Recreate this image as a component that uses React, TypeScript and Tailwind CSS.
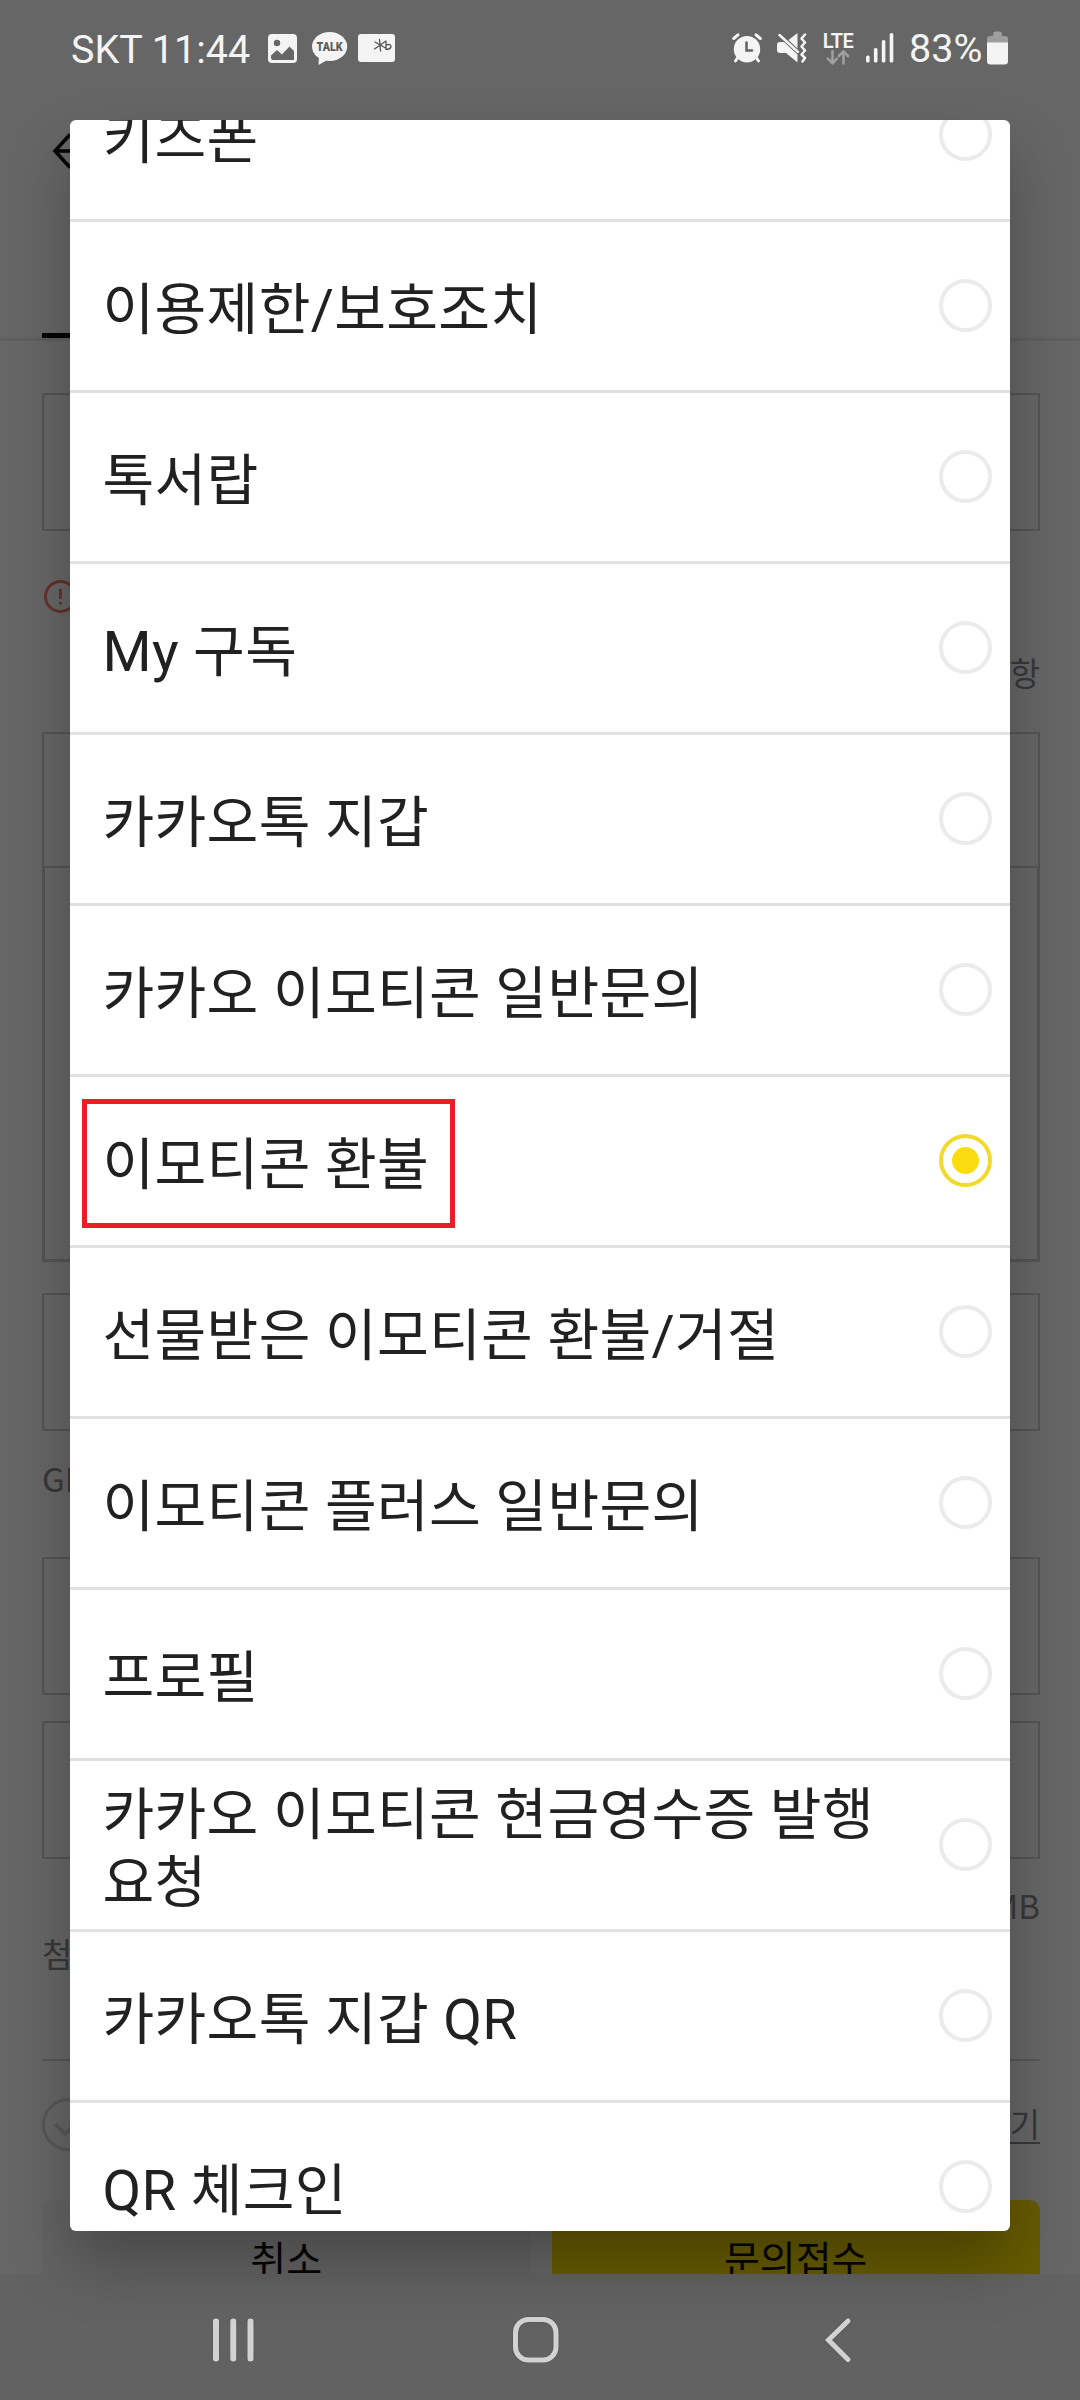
import React from "react";

type Option = { label: string; selected?: boolean };

const options: Option[] = [
  { label: "키즈폰" },
  { label: "이용제한/보호조치" },
  { label: "톡서랍" },
  { label: "My 구독" },
  { label: "카카오톡 지갑" },
  { label: "카카오 이모티콘 일반문의" },
  { label: "이모티콘 환불", selected: true },
  { label: "선물받은 이모티콘 환불/거절" },
  { label: "이모티콘 플러스 일반문의" },
  { label: "프로필" },
  { label: "카카오 이모티콘 현금영수증 발행 요청" },
  { label: "카카오톡 지갑 QR" },
  { label: "QR 체크인" },
];

function StatusBar() {
  return (
    <div className="flex h-[85px] shrink-0 items-start text-[#f4f4f4]">
      <div className="flex pl-[71px] pt-[26px]">
        <span className="w-[197px] whitespace-nowrap text-[39.500px] leading-[47px]">SKT 11:44</span>
        <svg className="mt-[8px]" width="29" height="29" viewBox="0 0 29 29">
          <rect width="29" height="29" rx="4" fill="#f4f4f4" />
          <circle cx="9" cy="9" r="3.2" fill="#666" />
          <path d="M3 21.5 L9 16 L14 20.5 L21.5 12.5 L26 17 V26 H5 Q3 26 3 24 Z" fill="#666" />
        </svg>
        <svg className="ml-[15px] mt-[6px]" width="36" height="34" viewBox="0 0 36 34">
          <ellipse cx="17.6" cy="14.5" rx="17.6" ry="14.5" fill="#f4f4f4" />
          <path d="M7 24 L6.5 33 L17 27 Z" fill="#f4f4f4" />
          <text x="17.6" y="19" textAnchor="middle" textLength="26" lengthAdjust="spacingAndGlyphs" fontSize="12.5" fontWeight="900" fill="#5c5c5c">TALK</text>
        </svg>
        <svg className="ml-[10px] mt-[8px]" width="37" height="28" viewBox="0 0 37 28">
          <rect width="37" height="28" rx="3" fill="#f4f4f4" />
          <g fill="none" stroke="#555" strokeWidth="1.3" strokeLinecap="round">
            <path d="M17 8 L27.5 14 M16.5 15 L28 7 M21.5 5.5 L22.5 17 M28 8 V15.5 M28 11 Q33 9.500 33 12.500 Q32 16 28 15" />
          </g>
        </svg>
      </div>
      <div className="ml-auto flex pr-[72px] pt-[25px]">
        <svg className="mt-[8px]" width="30" height="30" viewBox="0 0 30 30">
          <circle cx="15" cy="16.200" r="13.200" fill="#f4f4f4" />
          <g fill="none" stroke="#f4f4f4" strokeWidth="3" strokeLinecap="round">
            <path d="M1.700 5.500 L6 1.800 M28.300 5.500 L24 1.800 M5.500 25 L3.500 28 M24.500 25 L26.500 28" />
          </g>
          <path d="M14.500 9.500 V17.500 H20" fill="none" stroke="#666" strokeWidth="2.600" strokeLinecap="round" />
        </svg>
        <svg className="ml-[15px] mt-[8px]" width="30" height="30" viewBox="0 0 30 30">
          <path d="M3 9 H7 L20.500 21.500 V29.500 L9 20 H3 Q0 20 0 17 V12 Q0 9 3 9 Z" fill="#f4f4f4" />
          <path d="M20.500 0 V15.500 L11.500 7 Z" fill="#f4f4f4" />
          <g fill="none" stroke="#f4f4f4" strokeWidth="2.500" strokeLinecap="round" strokeLinejoin="round">
            <path d="M2.500 2 L21 19" />
            <path d="M28 1.500 L24.500 5.500 L28 9.500 L24.500 13.500 L28 17.500 L24.500 21.500 L28 25 L25.500 28.500" />
          </g>
        </svg>
        <div className="ml-[15px] mt-[5px] flex w-[32px] flex-col items-center">
          <span className="text-[20px] font-semibold leading-[22px] -tracking-[0.5px]">LTE</span>
          <svg className="-mt-[2px]" width="24" height="15" viewBox="0 0 24 15" fill="none" stroke="#a0a0a0" strokeWidth="2.500" strokeLinecap="round" strokeLinejoin="round">
            <path d="M6.500 1 V13 M1.800 8.500 L6.500 13.300 L11 8.500 M17.500 13.500 V1.500 M12.800 6 L17.500 1.500 L22 6" />
          </svg>
        </div>
        <svg className="ml-[12px] mt-[8px]" width="28" height="30" viewBox="0 0 28 30" fill="#f4f4f4">
          <rect x="0" y="22.500" width="3.600" height="7" rx="1.500" />
          <rect x="7.900" y="15" width="3.600" height="14.500" rx="1.500" />
          <rect x="15.800" y="7" width="3.600" height="22.500" rx="1.500" />
          <rect x="23.700" y="0" width="3.600" height="29.500" rx="1.500" />
        </svg>
        <span className="ml-[15px] w-[78px] whitespace-nowrap text-[39.500px] leading-[47px]">83%</span>
        <svg className="mt-[6px]" width="21" height="34" viewBox="0 0 21 34">
          <path d="M6 3 Q6 0.500 8 0.500 H13 Q15 0.500 15 3 V5 H18 Q21 5 21 8 V14 H0 V8 Q0 5 3 5 H6 Z" fill="#9d9d9d" />
          <path d="M0 11.500 H21 V30 Q21 33.500 17.500 33.500 H3.500 Q0 33.500 0 30 Z" fill="#f4f4f4" />
        </svg>
      </div>
    </div>
  );
}

function FormBox({ className }: { className: string }) {
  return <div className={`border-2 border-[#545454] ${className}`} />;
}

/* Inquiry form that sits dimmed under the picker. */
function InquiryForm() {
  return (
    <div className="flex h-[2189px] shrink-0 flex-col overflow-hidden font-['Noto_Sans_CJK_KR',sans-serif] text-[33px] leading-[44px] text-[#383838]">
      <div className="flex h-[256px] shrink-0 flex-col justify-between border-b-[3px] border-[#5e5e5e]">
        <svg className="ml-[52px] mt-[48px]" width="40" height="36" viewBox="0 0 40 36" fill="none" stroke="#000" strokeWidth="3.500">
          <path d="M18 1.500 L3 18 L18 34.500 M3 18 H40" />
        </svg>
        <div className="ml-[42px] h-[5px] w-[240px] bg-[#050505]" />
      </div>
      <div className="flex flex-col px-[42px] pr-[40px]">
        <FormBox className="mt-[52px] h-[138px]" />
        <svg className="ml-[2px] mt-[49px]" width="33" height="33" viewBox="0 0 33 33" fill="none" stroke="#66302a" strokeWidth="2.800">
          <circle cx="16.500" cy="16.500" r="15" />
          <path d="M16.500 9 V19 M16.500 22 V24.500" />
        </svg>
        <p className="mt-[37px] text-right">항</p>
        <FormBox className="mt-[38px] h-[134px] border-b-0" />
        <div className="h-[396px] border-[3px] border-t-2 border-[#545454]" />
        <FormBox className="mt-[31px] h-[138px]" />
        <p className="mt-[25px]">GIF</p>
        <FormBox className="mt-[57px] h-[138px]" />
        <FormBox className="mt-[26px] h-[138px]" />
        <p className="mt-[24px] text-right">MB</p>
        <p className="mt-[4px]">첨부</p>
        <div className="mt-[84px] h-[2px] bg-[#575757]" />
        <div className="mt-[37px] flex h-[53px] items-center justify-between">
          <svg width="53" height="53" viewBox="0 0 53 53" fill="none" stroke="#585858" strokeWidth="3">
            <circle cx="26.500" cy="26.500" r="25" />
            <path d="M13 26 L23 36 L39 20" strokeWidth="4" />
          </svg>
          <span className="mb-[3px] underline decoration-2 underline-offset-[5px]">보기</span>
        </div>
        <div className="mt-[49px] flex gap-[21px] text-[39px] leading-[48px] text-[#050505]">
          <div className="h-[120px] flex-1 rounded-[10px] bg-[#636363] pt-[33px] text-center">취소</div>
          <div className="h-[120px] flex-1 rounded-[10px] bg-[#665b00] pt-[33px] text-center">문의접수</div>
        </div>
      </div>
    </div>
  );
}

function NavBar() {
  return (
    <div className="flex h-[126px] items-start bg-[#626262] pt-[40px]">
      <svg className="ml-[208px]" width="52" height="52" viewBox="0 0 52 52" fill="#d2d2d2" stroke="#5a5a5a" strokeWidth="1">
        <rect x="4.500" y="4" width="7" height="44" rx="3" />
        <rect x="21.800" y="4" width="7" height="44" rx="3" />
        <rect x="39" y="4" width="7" height="44" rx="3" />
      </svg>
      <svg className="ml-[250px]" width="52" height="52" viewBox="0 0 52 52" fill="none">
        <rect x="5.500" y="5.500" width="40.500" height="40.500" rx="13" stroke="#5a5a5a" strokeWidth="7" />
        <rect x="5.500" y="5.500" width="40.500" height="40.500" rx="13" stroke="#d2d2d2" strokeWidth="5" />
      </svg>
      <svg className="ml-[258px]" width="40" height="52" viewBox="0 0 40 52" fill="none" strokeLinecap="round">
        <path d="M28 7 L8.500 26 L28 45.500" stroke="#5a5a5a" strokeWidth="7" />
        <path d="M28 7 L8.500 26 L28 45.500" stroke="#d2d2d2" strokeWidth="5" />
      </svg>
    </div>
  );
}

function OptionRow({ label, selected }: Option) {
  return (
    <li className="relative flex h-[171px] shrink-0 items-center justify-between border-b-[3px] border-[#e0e0e0] pl-[32.500px] pr-[18px]">
      <span className="w-[800px] break-keep pt-[8px] text-[56.250px] leading-[68px] tracking-[0.300px] text-[#212121]">{label}</span>
      {selected ? (
        <span className="mb-px flex size-[53px] shrink-0 items-center justify-center rounded-full border-4 border-[#f2da2c]">
          <span className="size-[27px] rounded-full bg-[#fadc10]" />
        </span>
      ) : (
        <span className="mb-px size-[53px] shrink-0 rounded-full border-4 border-[#ebebeb]" />
      )}
      {selected && (
        <span className="absolute left-[12px] top-[22px] h-[129px] w-[373px] border-[5px] border-[#e91e26]" />
      )}
    </li>
  );
}

export default function App() {
  return (
    <div lang="ko" className="relative flex h-[2400px] w-[1080px] flex-col overflow-hidden bg-[#666] font-[Roboto,'Noto_Sans_CJK_KR',sans-serif]">
      <StatusBar />
      <InquiryForm />
      <NavBar />
      <div className="absolute left-[70px] top-[120px] h-[2111px] w-[940px] rounded-[6px] shadow-[0_32px_60px_rgba(0,0,0,0.27)]">
        <ul className="flex h-full flex-col overflow-hidden rounded-[6px] bg-white">
          <li className="-mt-[69px]" aria-hidden="true" />
          {options.map((option) => (
            <OptionRow key={option.label} {...option} />
          ))}
        </ul>
      </div>
    </div>
  );
}
